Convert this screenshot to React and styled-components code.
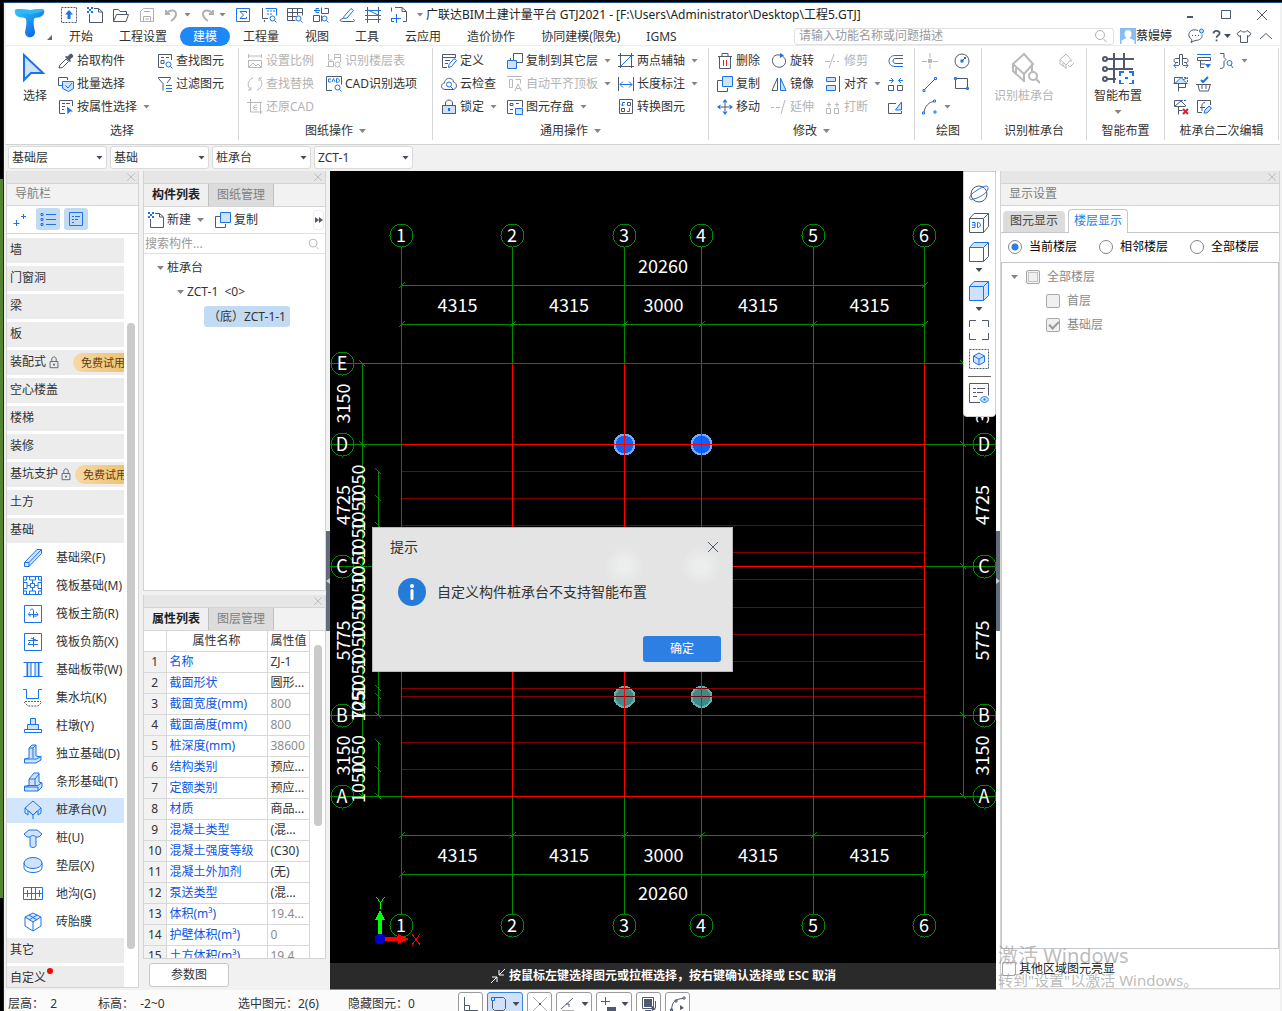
import React, { useState } from 'react';
import styled, { createGlobalStyle } from 'styled-components';

const GlobalStyle = createGlobalStyle`
* {
  box-sizing: border-box;
}
body {
  margin: 0;
  background: #000;
  overflow: hidden;
}
body, button, input, select {
  font-family: 'Noto Sans', 'Noto Sans CJK SC', sans-serif;
  font-size: 12px;
  line-height: 16px;
  color: #333;
}
button {
  border: 0;
  padding: 0;
  background: none;
  white-space: nowrap;
}
`;

/* ---------- icons ---------- */

const Svg = styled.svg`
flex: none;
display: block;
fill: none;
stroke-width: 1;
.d { stroke: ${({ $muted }) => ($muted ? '#b9b9b9' : '#4f5a6e')}; }
.b { stroke: ${({ $muted }) => ($muted ? '#b9b9b9' : '#1a73e8')}; }
.f { stroke: ${({ $muted }) => ($muted ? '#b9b9b9' : '#1a73e8')}; fill: ${({ $muted }) => ($muted ? '#eee' : '#cfe2fa')}; }
.D { fill: ${({ $muted }) => ($muted ? '#b9b9b9' : '#4f5a6e')}; }
.B { fill: ${({ $muted }) => ($muted ? '#b9b9b9' : '#1a73e8')}; }
.r { stroke: #e02020; }
.g { stroke: #b0b0b0; }
.w { stroke: #fff; }
.dd { stroke: #4f5a6e; stroke-dasharray: 2 1; }
.bb { stroke: #1a73e8; stroke-dasharray: 2 1; }
.k { stroke-width: 2; }
`;

const MAG = 'M9 11.5a2.5 2.5 0 1 0 5 0a2.5 2.5 0 1 0-5 0M13.5 13.5l2 2';

const glyphs = {
  upload: [['dd', 'M.5.5h15v15H.5z'], ['B', 'M8 3l4 4.5H9.5V12h-3V7.5H4z']],
  newDoc: [['d', 'M2.5 7v8.5h13V5L11.5 1.500H7M11.5 1.500V5h4'], ['B', 'M0 0h2v2H0zM4 0h2v2H4zM2 2h2v2H2zM0 4h2v2H0zM4 4h2v2H4z']],
  open: [['d', 'M.5 14.5v-12h5l1.5 2h6.5v3M.5 14.5l3-7h12l-2.5 7z']],
  save: [['g', 'M1.5 14.5v-10l3-3h10v13zM4.5 14V9.5h7V14M5 4.5h6M6 12h4']],
  undo: [['g k', 'M2 3v4h4M2.5 7C5 2.500 12 2 12 7c0 3-2 5-5 7']],
  redo: [['g k', 'M14 3v4h-4M13.5 7C11 2.500 4 2 4 7c0 3 2 5 5 7']],
  sigma: [['b', 'M1.5 1.5h13v13h-13z'], ['b', 'M11.5 6V4.5H5L8.500 8 5 11.5h6.5V10']],
  calSearch: [['d', 'M1.5 1v10.5H7M3.500 13v2'], ['b', 'M4.5 1.5h11v7M6 4h2M9 4h2M12 4h2M6 7h2M9 7h2'], ['b', MAG]],
  gridSearch: [['d', 'M.5 1.5h15v7M.5 1.5v12h8M.5 5.5h15M.5 9.5h9M5.5 1.5v12M10.5 1.5v7'], ['b', MAG]],
  planSearch: [['b', 'M6 1.5H3v4h3M1 3.5h6'], ['d', 'M8.500.5v6h7v-5h-4M.5 8.500h6v6h-6zM8.500 8.500v6'], ['b', MAG]],
  pen: [['b', 'M5 9.5l7-8 2.5 2L8 11l-3.5.5z'], ['d', 'M4 11.5C-1 13 1 14.500 5 14.500h9c2 0 2-2 0-2']],
  rail: [['d', 'M2.5 0v16M13.5 0v16'], ['b', 'M0 3.5h16M0 8.5h16M0 12.5h16M3 3l10 5']],
  docPlus: [['d', 'M4 .5h7l4.5 4v10H12M.5 4.5v-4M11 .5v4h4M3 14.5H.5V11'], ['b', 'M5.5 7v9M1 11.5h9']],
  pick: [['d', 'M1 15l1-3 6-6 2.5 2.5-6 6z'], ['D', 'M7 4l5 5 1-1-1-1.5L15 4c1-2-2-4-3-3L9.5 3.5 8 3z']],
  batch: [['d', 'M4 9.5H.5v-8h9V4'], ['f', 'M4.5 5.5h11v7l-5 3-6-3z'], ['b', 'M7.5 9.5l2.5 2.5 4-5']],
  byAttr: [['d', 'M7 14.5H1.5v-13h13V7M4 4.5h3M8 4.5h4M4 7.5h3M4 10.5h2'], ['B', 'M9 7.5l6 5h-3l-2.5 3z']],
  findEl: [['d', 'M7 14.5H1.5v-13h13V7M4 4.5h3M4 7.5h3v3H4zM9 4.5h3'], ['b', MAG]],
  filter: [['d', 'M6 14.5V7.5L1.5 2.5v-1h12v1L10 7'], ['b', 'M9 9.5h6M9 12.5h6M9 15.5h6']],
  ratio: [['d', 'M1.5 1v4M14.5 1v4M1.5 3h13M1.5 7.5h13v7h-13zM2 14l4-4 3 3 2-2 3 3']],
  swap: [['d', 'M6 2C0 4 0 11 4 14M4 14H1M4 14v-3M10 14c6-2 6-9 2-12M12 2h3M12 2v3']],
  restore: [['d', 'M3.5 0v13h12M0 3.5h15M13.5 3v12M10 6c-5 0-5 5 0 5M7 8.5h3']],
  floors: [['d', 'M2.5 1v6h4M.5 13.5h7v-5h-5v5M8.5 7V1.5h6V9M8.5 4.5h6'], ['b', MAG]],
  cad: [['d', 'M6 14.5H.5v-14h15v8'], ['b', 'M5 3H2.5v3H5M6 6l1.5-3.5L9 6M10.5 2.5v4c4 0 4-4 0-4'], ['b', MAG]],
  define: [['d', 'M6 14.5H1.5v-13h13V5M1.5 4.5h13M4 7.5h5M4 10.5h3'], ['b', 'M7.5 14.5l.5-3 5-6 2.5 2-5 6z']],
  cloud: [['d', 'M4 13.5C-1 13 0 7 3.500 7 4 1 12 1 12.500 6c4 1 4 7-.5 7.500z'], ['b', 'M5.5 8.5a2.5 2.5 0 1 0 5 0a2.5 2.5 0 1 0-5 0M9.5 10.5l3 3']],
  lock: [['f', 'M1.5 6.5h13v8h-13z'], ['d', 'M1.5 6.5h13v8h-13zM4.5 6V4c0-4 7-4 7 0v2'], ['b k', 'M8 9v3']],
  copyTo: [['f', 'M.5 7.5h9v8h-9z'], ['d', 'M6.5 7V.5h9v9H10M3.5 7V5']],
  autoTop: [['d', 'M0 .5h15M2.5 3.5h3v8h-3zM8.5 3.5h5v4M8 15l3-7 3.5 7M9.5 12.5h4']],
  saveEl: [['d', 'M6 14.5H.5v-13h15v7M3 4.5h3v2H3zM9 4.5h3M3 10.5h3'], ['f', 'M8.5 9.5h7v6h-7z']],
  twoPoint: [['d', 'M2.5 0v15M13.5 0v15M0 2.5h16M0 13.5h16'], ['b', 'M3 13L13 3']],
  length: [['d', 'M.5 1v14M15.5 1v14'], ['b', 'M2 8.5h12M5 5.5l-3 3 3 3M11 5.5l3 3-3 3']],
  convert: [['d', 'M1.5.5h13v14h-13zM9.5 3.5h3v3h-3zM3.5 9.5h3v3h-3z'], ['b', 'M7 3.5H4.5V7M3 5.5L4.5 7 6 5.5M9 12.5h2.5V9']],
  trash: [['d', 'M1 3.5h14M5 3V.5h6V3M2.5 4v11.5h11V4'], ['r', 'M6.5 7v6M9.5 7v6']],
  rotate: [['d', 'M9 2C3 1 1 5 1.500 8.500c1 7 11 8 13 1 .5-3-1-5-3-6.500'], ['B', 'M9 0l4 2.5L9 5z']],
  trim: [['d', 'M0 8.5h5M8 8.5h2M12 8.5h2M4 15L9 1']],
  copy: [['d', 'M5 4.5H.5v11h10V12'], ['f', 'M5.5.5h10v10h-10z']],
  mirror: [['d', 'M6.5 2v12.5H1z'], ['f', 'M9.5 2v12.5H15z']],
  align: [['f', 'M1.5 1.5h9v4h-9zM1.5 9.5h9v5h-9z'], ['d', 'M14.5 0v16']],
  move: [['d', 'M8 4v8M4 8h8'], ['B', 'M8 0l2.5 3.5h-5zM8 16l2.5-3.5h-5zM0 8l3.5-2.5v5zM16 8l-3.5-2.5v5z']],
  extend: [['d', 'M0 8.5h3M5 8.5h4M10 15l4-14']],
  breakIt: [['d', 'M1.5 9.5h4v5h-4zM9.5 9.5h4v5h-4zM2 5.5h4M4 3v5M10 5.5h4M12 3v5']],
  offset: [['b', 'M15 2.5H7c-8 0-8 11 0 11h8'], ['d', 'M15 5.5H8c-4 0-4 5 0 5h7']],
  merge: [['d', 'M.5 9.5h5v5h-5zM9.5 9.5h5v5h-5z'], ['b', 'M1 4.5h4M3 2l2.5 2.5L3 7M15 4.5h-4M13 2l-2.5 2.5L13 7']],
  stretch: [['d', 'M8 4.5H.5v10h13V12'], ['f', 'M7.5 11l6-8v8z']],
  point: [['d', 'M8 0v5M8 11v5M0 8.5h5M11 8.5h5'], ['D', 'M6 6h4v4H6z']],
  circle: [['d', 'M1 8a7 7 0 1 0 14 0a7 7 0 1 0-14 0M8 8l3-3'], ['B', 'M6.5 6.5h3v3h-3zM10 4h2v2h-2z']],
  line: [['d', 'M3 13L13 3'], ['b', 'M1 13.5h2v2H1zM12.5 1.5h2v2h-2z']],
  rect: [['d', 'M1.5 2.5h12v10h-12z'], ['b', 'M.5 1.5h2v2h-2zM12.5 11.5h2v2h-2z']],
  arc: [['d', 'M2 13C3 7 7 3 12 2.500'], ['b', 'M.5 13h2v2h-2zM11.5 1h2v2h-2zM12 12h2v2h-2z']],
  tap: [['d', 'M6.5 12V1.5h3V12M6 5.5H2.500c-2 0-2 4 0 4H5M10 5.500h3.500c2 0 2 4 0 4H11'], ['b', 'M1 12.5h5M3 10l-2 2.5L3 15M15 12.5h-5M13 10l2 2.5-2 2.5']],
  layers: [['b', 'M1 1.5h14'], ['d', 'M1.5 4.5h13v3h-13zM4.5 8v6.5H8M4 11h5'], ['B', 'M9 11h6l-3 4z']],
  zigFind: [['d', 'M1 .5h4v4l2 2-2 2v4c0 2-1 3-4 3'], ['b', 'M8 10a2.5 2.5 0 1 0 5 0a2.5 2.5 0 1 0-5 0M12 12l2 3']],
  slope: [['d', 'M14 2L1.5 7.5v-6H8'], ['bb', 'M8 1.5h6.5v5'], ['f', 'M2 7.5l6-6 6 6z'], ['d', 'M.5 7.5h14M5.5 15.5V8M5.5 11.5h7V8']],
  basket: [['d', 'M0 8.5h15M2 9l1.5 6h9L14 9M6 9v4M10 9v4'], ['b k', 'M5 4l2 2 5-5']],
  slopeDel: [['bb', 'M8 1.5h6'], ['d', 'M8 1.5H1.5v6h11M2 7l6-5 5 5M5.5 15.5V8M5.5 11.5h4'], ['r k', 'M10 10l5 5M15 10l-5 5']],
  editMark: [['d', 'M14.5 6V1.5h-13v12H6M9 3.5C5 4 6 7 6 12M4 8.500h5'], ['f', 'M8 14l1-3 4-4 2.5 2-4.5 5z']],
  arrowBig: [['f k', 'M5 3v25l7-7h12z']],
  capBig: [['d k', 'M16 2L5 12l11 10 9-10zM5 12v7l11 10M16 22v8M8 16v6M24 20v-8'], ['d k', 'M21 24a4 4 0 1 0 8 0a4 4 0 1 0-8 0M28 27l4 4']],
  capSmall: [['d', 'M8 1L2 6.5 8 12l5-5.500zM2 7v4l6 4M5 10v3M8 12v4M13 7v2M10 12l2 2 4-4']],
  gridBig: [['d k', 'M5 7h27M5 17h26M5 27h9M12 1v30M22 1v15'], ['d k', 'M1 7a2 2 0 1 0 4 0a2 2 0 1 0-4 0M1 17a2 2 0 1 0 4 0a2 2 0 1 0-4 0M1 27a2 2 0 1 0 4 0a2 2 0 1 0-4 0'], ['b k', 'M22 20h-4v4M27 20h4v4M22 32h-4v-4M27 32h4v-4M23 26h3']],
  plus2: [['b', 'M4.5 9v6M1.5 12.5h6M11.5 3v5M9 5.5h5']],
  listView: [['b', 'M1 2.5h2v2H1zM1 7.5h2v2H1zM1 12.5h2v2H1zM6 3.5h10M6 8.5h10M6 13.5h10']],
  cardView: [['b', 'M1.5 1.5h13v13h-13zM4 5.5h2M7 5.5h5M4 8.5h2M7 8.5h3M4 11.5h2']],
  search: [['g', 'M2.5 7a4.5 4.5 0 1 0 9 0a4.5 4.5 0 1 0-9 0M10.5 11l3 3']],
  miniLock: [['d', 'M3.5 7.5h9v7h-9zM5.5 7V4.5c0-3 5-3 5 0V7'], ['d k', 'M8 10v2']],
  cross: [['g', 'M3 3l10 10M13 3L3 13']],
  crossDark: [['d', 'M3 3l10 10M13 3L3 13']],
  minimize: [['d k', 'M5 10h6']],
  maximize: [['d', 'M3.5 3.5h9v8h-9z']],
  chat: [['d', 'M10 2.5C3 0 0 5 1 8c1 3 3 3 3 4l-1 2.500 4-2c5 0 8-3 7-6'], ['D', 'M4 7h1v1H4zM7 7h1v1H7zM10 7h1v1h-1z'], ['f', 'M11.5 3a2 2 0 1 0 4 0a2 2 0 1 0-4 0']],
  help: [['d k', 'M4 5c0-4 7-4 7 0 0 2-3.500 2.500-3.500 5M7.500 12v2']],
  shirt: [['d', 'M5 2.5c1 2 5 2 6 0l4 3-2 3-1.500-1v7h-7v-7L3 8.500l-2-3z']],
  up: [['d', 'M2 11l6-5.5 6 5.5']],
  hint: [['w', 'M15 1l-6 6M9 2v5h5M1 15l6-6M2 9h5v5']],
  ortho: [['d', 'M1.5 1v13.5H15M2 9.5h4.5v5']],
  region: [['d', 'M3.5 1.5h9l2 2v9l-2 2h-9l-2-2v-9z'], ['f', 'M.5 1.5h3v3h-3z']],
  crossOff: [['g', 'M1 1l14 14M15 1L1 15'], ['D', 'M7 7h2v2H7z']],
  angle: [['d', 'M1 13L13 2M6 8h3v3'], ['g k', 'M2 15h12']],
  plusBar: [['d', 'M5.5 1v8M1 5.5h9'], ['D', 'M7 11h9v4H7z']],
  shade: [['D', 'M3 3h8v8H3z'], ['d', 'M1.5 1.5h11v11h-11zM14.5 5v7M4 14.5h6'], ['D', 'M10 9l5 4-4 2z']],
  curve: [['d', 'M1.5 14C2 6 5 3 13 2.500M.5 13h2v2h-2zM5 4h2v2H5zM13 1h2v2h-2z'], ['D', 'M10 9l4 3-4 2z']],
};

// bigger glyphs drawn on a 20 unit grid
const partGlyphs = {
  beam: [['f', 'M1.5 14.5L14 1.5h4.5v4L6 18.5H1.5z'], ['b', 'M1.5 14.5H6v4M6 14.5L18.5 1.5']],
  raft: [['b', 'M.5.5h18v18H.5zM3.500 1v3H1M3.500 18v-3H1M15.500 1v3H18M15.500 18v-3H18M7.500 7.500h4v4h-4zM6.500 1v3h6V1M6.500 18v-3h6v3M1 6.500h3v6H1M18 6.500h-3v6h3M9.500 4v3M9.500 12v3M4 9.500h3M12 9.500h3']],
  mainBar: [['b', 'M1.5 1.5h17v17h-17zM10.5 14V6.5c0-2-3-2-3 0M6 10.5h9M7 8c-2 2-2 4 1 4M13 8c3 2 2 5-2 4']],
  negBar: [['b', 'M1.5 1.5h17v17h-17zM10.5 5v10M5 8.5h10M5 12.5h10M8 6l5 2M7 10l-2 2.5']],
  strip: [['f', 'M4 2.5h4v14H4zM12 2.5h4v14h-4z'], ['b', 'M.5 2.5h19M.5 16.5h19M4.5 3v13M15.5 3v13']],
  pit: [['b', 'M0 1.5h3.5v9h12v-9H19'], ['bb', 'M2 13.5h16'], ['dd', 'M1 14l4 4h10l4-4']],
  pier: [['f', 'M7.5 2.5h5v6h-5zM4.5 8.5h11v5h-11z'], ['b', 'M1.5 13.5h17v3h-17z']],
  single: [['f', 'M6 14V4l3-3h4v11l5 1v3l-5 3H1.5v-4z'], ['b', 'M6 4h4v10M10 4l3-3M1.5 15h12l5-3']],
  stripBase: [['f', 'M6 13V7l5-6h5v9l3 1v4l-4 4H1.5v-5H6z'], ['b', 'M6 7h6v6M12 7l4-5M4 13.5h11l4-3M1.5 15h13.5v4']],
  cap: [['f', 'M10 1L2 8l8 7 8-7z'], ['b', 'M2 8v5l3 2v-4M18 8v5l-3 2v-4M10 15v4M6 11l4 4 4-4']],
  pile: [['f', 'M1 6l5-4h8l5 4-3 3h-3v9c-1 2-5 2-6 0V9H4z'], ['b', 'M7 9c2-2 4-2 6 0']],
  cushion: [['b', 'M1 7v5c1 6 17 6 18 0V7'], ['f', 'M1 7a9 5.5 0 1 0 18 0a9 5.5 0 1 0-18 0']],
  trench: [['b', 'M.5 3.5h19v12H.5zM.5 9.5h19M4.5 6v7M8.5 4v11M12.5 4v11M16.5 6v7']],
  brick: [['f', 'M10 1l8 4-8 5-8-5z'], ['b', 'M2 5v9l8 5 8-5V5M10 10v9M6 8l8-5M6 3l8 5']],
  orbit: [['d', 'M2 10a8 8 0 1 0 16 0a8 8 0 1 0-16 0'], ['b', 'M5 15C-2 17 0 11 7 7c7-5 13-7 12-2-1 4-9 9-14 10']],
  cube3d: [['d', 'M.5 5.5h14v14H.5zM.5 5.5L5 .5h14.5v13l-5 6M14.5 5.5l5-5'], ['b', 'M3 9.5h3v5H3M3 12h3M8.5 9.5v5c4 0 4-5 0-5']],
  cubeTop: [['d', 'M.5 5.5h14v14H.5zM14.5 19.5l5-5V.5'], ['f', 'M.5 5.5L5 .5h14.5l-5 5z']],
  cubeFull: [['f', 'M.5 5.5L5 .5h14.5v14l-5 5H.5z'], ['b', 'M.5 5.5h14v14M14.5 5.5l5-5']],
  frame: [['d', 'M.5 7V.5H7M13 .5h6.5V7M.5 13v6.5H7M13 19.5h6.5V13']],
  hexBox: [['dd', 'M.5.5h19v19H.5z'], ['f', 'M10 4l5.5 3v6L10 16l-5.5-3V7z'], ['b', 'M4.5 7l5.5 3 5.5-3M10 10v6']],
  listEye: [['d', 'M11 19.5H.5V.5h19v12M4 5.5h3M8 5.5h8M4 9.5h3M8 9.5h6M4 13.5h4'], ['f', 'M11 16.5c3-4 6-4 9 0-3 4-6 4-9 0'], ['B', 'M14.5 15.5h2v2h-2z']],
};

const Icon = ({ name, size = 16, muted }) => {
  const big = partGlyphs[name];
  const box = big ? 20 : name.endsWith('Big') ? 32 : 16;
  return (
    <Svg width={size} height={size} viewBox={`0 0 ${box} ${box}`} $muted={muted} aria-hidden="true">
      {(big || glyphs[name]).map(([cls, d], i) => <path key={i} className={cls} d={d} />)}
    </Svg>
  );
};

const Caret = styled.span`
flex: none;
width: 7px;
height: 4px;
background: ${({ $dark }) => ($dark ? '#444c5c' : '#858585')};
clip-path: polygon(0 0, 100% 0, 50% 100%);
`;

/* ---------- window frame and header ---------- */

const Screen = styled.div`
display: flex;
height: 100vh;
padding-top: 2px;
background: #000;
`;

const Edge = styled.div`
flex: 0 0 3px;
background: linear-gradient(#000 177px, #568432 177px, #568432 896px, #000 896px);
`;

const Window = styled.div`
flex: 1;
min-width: 0;
display: flex;
flex-direction: column;
padding: 0 2px;
background: #f1f1f1;
border-top: 1px solid #24508c;
border-left: 1px solid #16263c;
`;

const Header = styled.header`
display: flex;
height: 43px;
background: #fff;
border-bottom: 1px solid #ececec;
`;

const LogoBox = styled.div`
flex: 0 0 50px;
display: flex;
align-items: center;
padding: 0 2px 0 7px;
`;

const Corner = styled.span`
align-self: flex-end;
flex: none;
width: 5px;
height: 5px;
margin-bottom: 5px;
background: #666;
clip-path: polygon(100% 0, 100% 100%, 0 100%);
`;

const HeaderRows = styled.div`
flex: 1;
min-width: 0;
`;

const TitleRow = styled.div`
display: flex;
align-items: center;
height: 23px;
`;

const QuickButton = styled.button`
display: flex;
align-items: center;
justify-content: center;
flex: 0 0 ${({ $wide }) => ($wide ? 35 : 26)}px;
gap: 4px;
height: 22px;
`;

const Overflow = styled.button`
display: flex;
align-items: center;
justify-content: center;
flex: 0 0 14px;
height: 22px;
padding-left: 2px;
`;

const AppTitle = styled.h1`
flex: 1;
margin: 0;
font-size: 12px;
font-weight: 400;
line-height: 22px;
white-space: nowrap;
color: #222;
`;

const WinButton = styled.button`
display: flex;
align-items: center;
justify-content: center;
width: 36px;
height: 22px;
`;

const MenuRow = styled.nav`
display: flex;
align-items: center;
height: 20px;
`;

const MenuItem = styled.button`
height: 19px;
padding: 0 13px;
border-radius: 10px;
line-height: 19px;
background: ${({ $active }) => ($active ? '#1e88f8' : 'none')};
color: ${({ $active }) => ($active ? '#fff' : '#333')};
`;

const SearchBox = styled.label`
display: flex;
align-items: center;
flex: 0 0 320px;
height: 17px;
margin-left: auto;
padding: 0 4px;
border: 1px solid #e0e0e0;
border-radius: 3px;
`;

const PlainInput = styled.input`
flex: 1;
min-width: 0;
height: 15px;
padding: 0;
border: 0;
outline: 0;
background: none;
&::placeholder {
  color: #9a9a9a;
}
`;

const User = styled.button`
display: flex;
align-items: center;
margin: 0 16px 0 6px;
color: #222;
`;

const HeadTool = styled.button`
display: flex;
align-items: center;
flex: 0 0 ${({ $w }) => $w || 22}px;
height: 18px;
`;

/* ---------- ribbon ---------- */

const Ribbon = styled.div`
display: flex;
height: 99px;
padding-top: 2px;
background: #fff;
border-bottom: 1px solid #d2d2d2;
`;

const Group = styled.section`
flex: 0 0 ${({ $w }) => $w}px;
height: 92px;
border-right: 1px solid #d8d8d8;
`;

const GroupBody = styled.div`
display: flex;
height: 71px;
padding: 1px 0 0 ${({ $pad }) => $pad || 8}px;
`;

const ToolGrid = styled.div`
display: grid;
grid-auto-flow: column;
grid-template-rows: repeat(3, 23px);
grid-template-columns: ${({ $cols }) => $cols};
align-items: center;
`;

const Tool = styled.button`
display: flex;
align-items: center;
height: 22px;
gap: 3px;
color: ${({ disabled }) => (disabled ? '#b3b3b3' : '#333')};
${Caret} {
  margin-left: 3px;
}
`;

const BigTool = styled.button`
display: flex;
flex-direction: column;
align-items: center;
width: ${({ $w }) => $w}px;
height: 70px;
padding-top: 3px;
line-height: 24px;
color: ${({ disabled }) => (disabled ? '#b3b3b3' : '#333')};
${Caret} {
  margin-top: 2px;
}
`;

const Caption = styled.div`
display: flex;
align-items: center;
justify-content: center;
gap: 6px;
height: 24px;
color: #333;
`;

const toolItem = (item) => {
  const [icon, text, opts = ''] = item;
  const off = opts.includes('off');
  return (
    <Tool key={icon} disabled={off} aria-label={text || icon}>
      <Icon name={icon} muted={off} />
      {text}
      {opts.includes('menu') && <Caret />}
    </Tool>
  );
};

const selectTools = [
  ['pick', '拾取构件'], ['batch', '批量选择'], ['byAttr', '按属性选择', 'menu'],
  ['findEl', '查找图元'], ['filter', '过滤图元'],
];
const sheetTools = [
  ['ratio', '设置比例', 'off'], ['swap', '查找替换', 'off'], ['restore', '还原CAD', 'off'],
  ['floors', '识别楼层表', 'off'], ['cad', 'CAD识别选项'],
];
const commonTools = [
  ['define', '定义'], ['cloud', '云检查'], ['lock', '锁定', 'menu'],
  ['copyTo', '复制到其它层', 'menu'], ['autoTop', '自动平齐顶板', 'off menu'], ['saveEl', '图元存盘', 'menu'],
  ['twoPoint', '两点辅轴', 'menu'], ['length', '长度标注', 'menu'], ['convert', '转换图元'],
];
const editTools = [
  ['trash', '删除'], ['copy', '复制'], ['move', '移动'],
  ['rotate', '旋转'], ['mirror', '镜像'], ['extend', '延伸', 'off'],
  ['trim', '修剪', 'off'], ['align', '对齐', 'menu'], ['breakIt', '打断', 'off'],
  ['offset', ''], ['merge', ''], ['stretch', ''],
];
const drawTools = [['point', '', 'off'], ['line', ''], ['arc', '', 'menu'], ['circle', ''], ['rect', '']];
const capTools = [['tap', ''], ['slope', ''], ['slopeDel', ''], ['layers', ''], ['basket', ''], ['editMark', ''], ['zigFind', '', 'menu']];

/* ---------- combo bar ---------- */

const ComboBar = styled.div`
display: flex;
align-items: center;
gap: 3px;
height: 25px;
padding-left: 2px;
`;

const ComboBox = styled.div`
display: flex;
align-items: center;
width: 99px;
height: 23px;
padding-right: 3px;
background: #fff;
border: 1px solid #dadada;
border-radius: 3px;
`;

const ComboSelect = styled.select`
flex: 1;
min-width: 0;
height: 21px;
padding: 0 0 0 3px;
border: 0;
outline: 0;
background: none;
appearance: none;
`;

/* ---------- panels ---------- */

const Main = styled.main`
flex: 1;
min-height: 0;
display: flex;
padding-top: 1px;
`;

const Panel = styled.section`
display: flex;
flex-direction: column;
flex: ${({ $flex }) => $flex || '1'};
min-width: 0;
min-height: 0;
overflow: hidden;
background: #fff;
border: 1px solid #d4d4d4;
border-top: 0;
`;

const Strip = styled.div`
display: flex;
justify-content: flex-end;
align-items: center;
flex: 0 0 12px;
padding-right: 1px;
background: #e6e6e6;
border-bottom: 1px solid #d4d4d4;
`;

const CloseButton = styled.button`
display: flex;
height: ${({ $tall }) => ($tall ? 16 : 12)}px;
`;

const PanelTitle = styled.h2`
flex: 0 0 22px;
margin: 0;
padding-left: 8px;
font-size: 12px;
font-weight: 400;
line-height: 20px;
color: #808080;
background: #f2f2f2;
border-bottom: 1px solid #d4d4d4;
`;

const PanelClose = () => (
  <Strip><CloseButton aria-label="关闭"><Icon name="cross" size={12} /></CloseButton></Strip>
);

/* navigation */

const NavColumn = styled.div`
flex: 0 0 133px;
min-width: 0;
display: flex;
margin: 0 4px 2px 0;
`;

const NavTools = styled.div`
display: flex;
align-items: center;
gap: 4px;
flex: 0 0 28px;
padding: 0 0 1px 1px;
border-bottom: 1px solid #d4d4d4;
`;

const NavToggle = styled.button`
display: flex;
align-items: center;
justify-content: center;
width: 24px;
height: 22px;
border-radius: 3px;
background: ${({ $on }) => ($on ? '#c2daf2' : 'none')};
`;

const NavBody = styled.div`
flex: 1;
min-height: 0;
display: flex;
`;

const NavList = styled.div`
flex: 1;
min-width: 0;
display: flex;
flex-direction: column;
gap: 3px;
padding-top: 4px;
overflow: hidden;
`;

const Category = styled.button`
display: flex;
align-items: center;
flex: 0 0 25px;
gap: 1px;
padding: 0 0 1px 3px;
overflow: hidden;
background: #ececec;
`;

const Trial = styled.span`
flex: none;
width: 60px;
height: 19px;
margin-left: ${({ $gap }) => $gap}px;
padding-left: 8px;
border-radius: 10px 0 0 10px;
background: linear-gradient(90deg, #f5d9a6, #ebbf64);
color: #6b3a0c;
font-size: 11px;
line-height: 19px;
text-align: left;
white-space: nowrap;
`;

const RedDot = styled.span`
align-self: flex-start;
width: 6px;
height: 6px;
margin-top: 2px;
border-radius: 50%;
background: #f00;
`;

const Part = styled.button`
display: flex;
align-items: center;
flex: 0 0 25px;
gap: 13px;
padding: 0 0 1px 16px;
background: ${({ $active }) => ($active ? '#d1e6fc' : 'none')};
`;

const Track = styled.div`
display: flex;
flex-direction: column;
flex: 0 0 ${({ $w }) => $w}px;
align-items: center;
`;

const Thumb = styled.div`
flex: ${({ $size }) => $size} 0 0;
width: 8px;
border-radius: 4px;
background: #cacaca;
`;

const Space = styled.div`
flex: ${({ $size }) => $size} 0 0;
`;

const categories = [
  { name: '墙' }, { name: '门窗洞' }, { name: '梁' }, { name: '板' },
  { name: '装配式', trial: 11 }, { name: '空心楼盖' }, { name: '楼梯' }, { name: '装修' },
  { name: '基坑支护', trial: 1 }, { name: '土方' }, { name: '基础' },
];

const parts = [
  ['beam', '基础梁(F)'], ['raft', '筏板基础(M)'], ['mainBar', '筏板主筋(R)'], ['negBar', '筏板负筋(X)'],
  ['strip', '基础板带(W)'], ['pit', '集水坑(K)'], ['pier', '柱墩(Y)'], ['single', '独立基础(D)'],
  ['stripBase', '条形基础(T)'], ['cap', '桩承台(V)'], ['pile', '桩(U)'], ['cushion', '垫层(X)'],
  ['trench', '地沟(G)'], ['brick', '砖胎膜'],
];

const Navigation = () => {
  const [active, setActive] = useState('cap');
  return (
    <NavColumn>
      <Panel>
        <PanelClose />
        <PanelTitle>导航栏</PanelTitle>
        <NavTools>
          <NavToggle aria-label="展开"><Icon name="plus2" /></NavToggle>
          <NavToggle $on aria-label="列表"><Icon name="listView" /></NavToggle>
          <NavToggle $on aria-label="卡片"><Icon name="cardView" /></NavToggle>
        </NavTools>
        <NavBody>
          <NavList>
            {categories.map(({ name, trial }) => (
              <Category key={name}>
                {name}
                {trial && <Icon name="miniLock" size={14} />}
                {trial && <Trial $gap={trial}>免费试用</Trial>}
              </Category>
            ))}
            {parts.map(([icon, text]) => (
              <Part key={icon} $active={icon === active} onClick={() => setActive(icon)}>
                <Icon name={icon} size={20} />{text}
              </Part>
            ))}
            <Category>其它</Category>
            <Category>自定义<RedDot /></Category>
          </NavList>
          <Track $w={14}><Space $size={89} /><Thumb $size={628} /><Space $size={38} /></Track>
        </NavBody>
      </Panel>
    </NavColumn>
  );
};

/* component list and properties */

const MidColumn = styled.div`
flex: 0 0 183px;
min-width: 0;
display: flex;
flex-direction: column;
gap: 4px;
`;

const Tabs = styled.div`
display: flex;
flex: 0 0 23px;
background: #f2f2f2;
border-bottom: 1px solid #d4d4d4;
`;

const Tab = styled.button`
padding: 0 8px;
font-weight: ${({ $active }) => ($active ? 600 : 400)};
color: ${({ $active }) => ($active ? '#222' : '#808080')};
background: ${({ $active }) => ($active ? '#f0f0f0' : '#dcdcdc')};
border-right: 1px solid #c0c0c0;
`;

const ListTools = styled.div`
display: flex;
align-items: center;
flex: 0 0 27px;
gap: 11px;
padding: 0 1px 0 4px;
border-bottom: 1px solid #e2e2e2;
`;

const MoreButton = styled.button`
display: flex;
align-items: center;
justify-content: center;
width: 11px;
height: 20px;
margin-left: auto;
border: 1px solid #ececec;
border-radius: 3px;
`;

const ListSearch = styled.label`
display: flex;
align-items: center;
flex: 0 0 20px;
padding: 0 4px 0 1px;
border-bottom: 1px solid #e2e2e2;
`;

const Tree = styled.div`
padding-top: 2px;
`;

const TreeRow = styled.div`
display: flex;
align-items: center;
gap: ${({ $gap }) => $gap || 3}px;
height: 24px;
padding-left: ${({ $indent }) => $indent}px;
`;

const Selected = styled.span`
height: 21px;
padding: 0 4px;
border-radius: 3px;
line-height: 21px;
background: #c2daf2;
`;

const PropBody = styled.div`
flex: 1;
min-height: 0;
display: flex;
overflow: hidden;
`;

const PropTable = styled.table`
flex: 0 0 165px;
width: 165px;
align-self: flex-start;
table-layout: fixed;
border-collapse: collapse;
td, th {
  height: 21px;
  padding: 0 3px;
  border-right: 1px solid #d8d8d8;
  border-bottom: 1px solid #d8d8d8;
  font-weight: 400;
  line-height: 20px;
  white-space: nowrap;
  overflow: hidden;
}
tbody th {
  padding: 0;
  background: #f2f2f2;
  text-align: center;
}
`;

const NameCell = styled.td`
color: #0b55e6;
`;

const ValueCell = styled.td`
color: ${({ $grey }) => ($grey ? '#8c8c8c' : '#333')};
`;

const ParamRow = styled.div`
flex: 0 0 27px;
padding: 0 6px;
`;

const ParamButton = styled.button`
width: 80px;
height: 24px;
background: #fff;
border: 1px solid #c8c8c8;
border-radius: 3px;
`;

const props = [
  ['名称', 'ZJ-1'], ['截面形状', '圆形...'], ['截面宽度(mm)', '800', 1], ['截面高度(mm)', '800', 1],
  ['桩深度(mm)', '38600', 1], ['结构类别', '预应...'], ['定额类别', '预应...'], ['材质', '商品...'],
  ['混凝土类型', '(混...'], ['混凝土强度等级', '(C30)'], ['混凝土外加剂', '(无)'], ['泵送类型', '(混...'],
  ['体积(m³)', '19.4...', 1], ['护壁体积(m³)', '0', 1], ['土方体积(m³)', '19.4', 1],
];

const ComponentColumn = () => (
  <MidColumn>
    <Panel $flex="420 0 0">
      <PanelClose />
      <Tabs><Tab $active>构件列表</Tab><Tab>图纸管理</Tab></Tabs>
      <ListTools>
        <Tool><Icon name="newDoc" />新建<Caret /></Tool>
        <Tool><Icon name="copy" />复制</Tool>
        <MoreButton aria-label="更多">
          <Svg width="8" height="6" viewBox="0 0 8 6"><path className="D" d="M0 0l4 3-4 3zM4 0l4 3-4 3z" /></Svg>
        </MoreButton>
      </ListTools>
      <ListSearch>
        <PlainInput placeholder="搜索构件..." aria-label="搜索构件" />
        <Icon name="search" size={14} />
      </ListSearch>
      <Tree>
        <TreeRow $indent={13}><Caret />桩承台</TreeRow>
        <TreeRow $indent={33}><Caret />ZCT-1&nbsp; &lt;0&gt;</TreeRow>
        <TreeRow $indent={60}><Selected>（底）ZCT-1-1</Selected></TreeRow>
      </Tree>
    </Panel>
    <Panel $flex="364 0 0">
      <PanelClose />
      <Tabs><Tab $active>属性列表</Tab><Tab>图层管理</Tab></Tabs>
      <PropBody>
        <PropTable>
          <colgroup><col width="22" /><col width="101" /><col width="42" /></colgroup>
          <thead><tr><th aria-label="序号" /><th>属性名称</th><th>属性值</th></tr></thead>
          <tbody>
            {props.map(([name, value, grey], i) => (
              <tr key={name}>
                <th scope="row">{i + 1}</th>
                <NameCell>{name}</NameCell>
                <ValueCell $grey={grey}>{value}</ValueCell>
              </tr>
            ))}
          </tbody>
        </PropTable>
        <Track $w={17}><Space $size={14} /><Thumb $size={182} /><Space $size={132} /></Track>
      </PropBody>
    </Panel>
    <ParamRow><ParamButton>参数图</ParamButton></ParamRow>
  </MidColumn>
);

/* ---------- drawing area ---------- */

const Splitter = styled.div`
flex: 0 0 4px;
display: flex;
align-items: flex-start;
background: ${({ $white }) => ($white ? '#fff' : '#f1f1f1')};
`;

const Grip = styled.button`
width: 4px;
height: 100px;
margin-top: 360px;
background: #626c7a;
&::before {
  content: '';
  display: block;
  height: 6px;
  background: #c8ccd2;
  clip-path: ${({ $right }) => ($right ? 'polygon(0 0, 100% 50%, 0 100%)' : 'polygon(100% 0, 0 50%, 100% 100%)')};
}
`;

const CanvasColumn = styled.div`
flex: 1;
min-width: 0;
display: flex;
flex-direction: column;
`;

const Canvas = styled.div`
position: relative;
flex: 1;
min-height: 0;
overflow: hidden;
background: #000;
`;

const Plan = styled.svg`
display: block;
width: 100%;
height: 100%;
fill: none;
shape-rendering: crispEdges;
text {
  fill: #fff;
  font-family: 'Noto Sans CJK SC', sans-serif;
  font-size: 18px;
  text-anchor: middle;
}
`;

const xs = [401, 512, 624, 701, 813, 924];
const ys = [363, 444, 566, 715, 796];
const letters = ['E', 'D', 'C', 'B', 'A'];
const minor = [471, 498, 525, 552, 579, 607, 634, 661, 688, 696, 742, 769];
const spansX = ['4315', '4315', '3000', '4315', '4315'];
const spansY = ['3150', '4725', '5775', '3150'];
const chain = [471, 498, 525, 552, 579, 607, 634, 661, 688, 715];
const GREEN = '#008a00';

const Line = ({ x1, y1, x2, y2, c = GREEN }) => (
  <line x1={x1 + 0.5} y1={y1 + 0.5} x2={x2 + 0.5} y2={y2 + 0.5} stroke={c} />
);

const Tick = ({ x, y, back }) => (
  <Line x1={x - 3} y1={back ? y - 3 : y + 3} x2={x + 3} y2={back ? y + 3 : y - 3} />
);

const Bubble = ({ x, y, children }) => (
  <>
    <circle cx={x + 0.5} cy={y + 0.5} r="11.5" stroke={GREEN} />
    <text x={x} y={y + 7}>{children}</text>
  </>
);

const Turned = ({ x, y, children }) => (
  <text transform={`translate(${x + 7} ${y}) rotate(-90)`}>{children}</text>
);

const FloorPlan = () => (
  <Plan viewBox="330 171 666 792" role="img" aria-label="轴网">
    {xs.map((x, i) => (
      <g key={x}>
        <Line x1={x} y1={247} x2={x} y2={363} />
        <Line x1={x} y1={796} x2={x} y2={913} />
        <Bubble x={x} y={235}>{i + 1}</Bubble>
        <Bubble x={x} y={925}>{i + 1}</Bubble>
        <Tick x={x} y={324} />
        <Tick x={x} y={835} />
      </g>
    ))}
    {[285, 324, 835, 874].map((y) => <Line key={y} x1={401} y1={y} x2={924} y2={y} />)}
    {[401, 924].map((x) => <g key={x}><Tick x={x} y={285} /><Tick x={x} y={874} /></g>)}
    {spansX.map((t, i) => (
      <g key={i}>
        <text x={(xs[i] + xs[i + 1]) / 2 + 1} y="312">{t}</text>
        <text x={(xs[i] + xs[i + 1]) / 2 + 1} y="862">{t}</text>
      </g>
    ))}
    <text x="663" y="273">20260</text>
    <text x="663" y="900">20260</text>

    {ys.map((y, i) => (
      <g key={y}>
        <Line x1={330} y1={y} x2={401} y2={y} />
        <Line x1={924} y1={y} x2={996} y2={y} />
        <Bubble x={342} y={y}>{letters[i]}</Bubble>
        <Bubble x={984} y={y}>{letters[i]}</Bubble>
        <Tick x={362} y={y} back />
        <Tick x={963} y={y} back />
      </g>
    ))}
    <Line x1={362} y1={363} x2={362} y2={796} />
    <Line x1={963} y1={363} x2={963} y2={796} />
    <Line x1={378} y1={471} x2={378} y2={715} />
    <Line x1={378} y1={742} x2={378} y2={796} />
    {[...chain, 696, 742, 769, 796].map((y) => <Tick key={y} x={378} y={y} back />)}
    {spansY.map((t, i) => (
      <g key={i}>
        <Turned x={343} y={(ys[i] + ys[i + 1]) / 2}>{t}</Turned>
        <Turned x={982} y={(ys[i] + ys[i + 1]) / 2}>{t}</Turned>
      </g>
    ))}
    {chain.slice(1).map((y, i) => <Turned key={y} x={358} y={(chain[i] + y) / 2}>1050</Turned>)}
    <Turned x={358} y={705}>725</Turned>
    <Turned x={358} y={755}>1050</Turned>
    <Turned x={358} y={783}>1050</Turned>

    {[624, 701].map((x) => (
      <g key={x} strokeWidth="2">
        <circle cx={x + 0.5} cy="444.5" r="10" fill="#0d62fb" stroke="#74abff" />
        <circle cx={x + 0.5} cy="697" r="10" fill="#428888" stroke="#5fb3b0" />
      </g>
    ))}
    {minor.map((y) => <Line key={y} x1={401} y1={y} x2={924} y2={y} c="#820000" />)}
    {ys.map((y) => <Line key={y} x1={401} y1={y} x2={924} y2={y} c="#f00" />)}
    {xs.map((x) => <Line key={x} x1={x} y1={363} x2={x} y2={796} c="#f00" />)}

    <path d="M378 937v-17h-3l5-10 5 10h-3v17z" fill="#0f0" />
    <path d="M384 937h14v-3l11 5-11 5v-3h-14z" fill="#f00" />
    <circle cx="380" cy="939" r="5.5" fill="#0000c8" />
    <path d="M376.500 897l4 6 4-6M380.500 903v6" stroke="#0f0" />
    <path d="M412 934l8 11M420 934l-8 11" stroke="#f00" />
  </Plan>
);

const ViewBar = styled.div`
position: absolute;
top: 0;
right: 0;
display: flex;
flex-direction: column;
align-items: center;
width: 33px;
height: 246px;
padding: 8px 1px 0 0;
background: #fff;
border: 1px solid #d0d0d0;
border-radius: 0 0 4px 4px;
`;

const ViewButton = styled.button`
display: flex;
flex-direction: column;
align-items: center;
gap: 6px;
padding-bottom: 5px;
margin-top: 4px;
`;

const ViewRule = styled.div`
width: 23px;
height: 1px;
margin: 2px 0 2px;
background: #666;
`;

const Dialog = styled.div`
position: absolute;
left: 42px;
top: 356px;
width: 361px;
padding: 10px 11px 9px 17px;
display: flex;
flex-direction: column;
font-size: 14px;
border: 1px solid #b9b9b9;
background:
  radial-gradient(circle at 251px 38px, #ebeeec 6px, transparent 20px),
  radial-gradient(circle at 328px 38px, #ebeeec 6px, transparent 20px),
  #e4e4e4;
`;

const DialogHead = styled.div`
display: flex;
justify-content: space-between;
align-items: center;
height: 18px;
`;

const DialogText = styled.div`
display: flex;
align-items: center;
gap: 11px;
margin: 22px 0 30px;
padding-left: 8px;
color: #333;
`;

const OkButton = styled.button`
align-self: flex-end;
width: 78px;
height: 26px;
border-radius: 3px;
background: #2d7fe3;
color: #fff;
`;

const HintBar = styled.div`
display: flex;
align-items: center;
justify-content: center;
gap: 3px;
flex: 0 0 27px;
color: #fff;
font-weight: 600;
background: #2a2a2a;
border-bottom: 1px solid #8a8a8a;
white-space: nowrap;
`;

const DrawingArea = () => {
  const [open, setOpen] = useState(true);
  return (
    <CanvasColumn>
      <Canvas>
        <FloorPlan />
        <ViewBar>
          <ViewButton aria-label="旋转视图"><Icon name="orbit" size={20} /></ViewButton>
          <ViewButton aria-label="三维"><Icon name="cube3d" size={20} /></ViewButton>
          <ViewButton aria-label="俯视"><Icon name="cubeTop" size={20} /><Caret $dark /></ViewButton>
          <ViewButton aria-label="实体"><Icon name="cubeFull" size={20} /><Caret $dark /></ViewButton>
          <ViewButton aria-label="全屏"><Icon name="frame" size={20} /></ViewButton>
          <ViewButton aria-label="局部三维"><Icon name="hexBox" size={20} /></ViewButton>
          <ViewRule />
          <ViewButton aria-label="显示设置"><Icon name="listEye" size={20} /></ViewButton>
        </ViewBar>
        {open && (
          <Dialog role="dialog" aria-label="提示">
            <DialogHead>
              提示
              <CloseButton $tall aria-label="关闭" onClick={() => setOpen(false)}><Icon name="crossDark" /></CloseButton>
            </DialogHead>
            <DialogText>
              <svg width="28" height="28" viewBox="0 0 28 28" aria-hidden="true">
                <circle cx="14" cy="14" r="14" fill="#247bd8" />
                <circle cx="14" cy="8" r="2" fill="#fff" />
                <path d="M14 12.5v8" stroke="#fff" strokeWidth="3" strokeLinecap="round" />
              </svg>
              自定义构件桩承台不支持智能布置
            </DialogText>
            <OkButton onClick={() => setOpen(false)}>确定</OkButton>
          </Dialog>
        )}
      </Canvas>
      <HintBar><Icon name="hint" />按鼠标左键选择图元或拉框选择，按右键确认选择或 ESC 取消</HintBar>
    </CanvasColumn>
  );
};

/* ---------- display settings ---------- */

const RightColumn = styled.div`
position: relative;
flex: 0 0 280px;
min-width: 0;
display: flex;
padding-bottom: 1px;
`;

const ShowTabs = styled.div`
display: flex;
align-items: flex-end;
gap: 3px;
flex: 0 0 27px;
padding-left: 2px;
border-bottom: 1px solid #c3c6cc;
`;

const ShowTab = styled.button`
height: ${({ $active }) => ($active ? 24 : 21)}px;
margin-bottom: ${({ $active }) => ($active ? -1 : 0)}px;
padding: 0 ${({ $active }) => ($active ? 5 : 7)}px 1px;
border: ${({ $active }) => ($active ? '1px solid #c3c6cc' : '0')};
border-bottom: 0;
border-radius: 4px 4px 0 0;
color: ${({ $active }) => ($active ? '#2a7de1' : '#444')};
background: ${({ $active }) => ($active ? '#fff' : '#dcdcdc')};
`;

const RadioRow = styled.div`
display: flex;
align-items: center;
gap: 22px;
flex: 0 0 29px;
padding: 0 0 1px 7px;
`;

const RadioLabel = styled.label`
display: flex;
align-items: center;
gap: 7px;
color: #000;
white-space: nowrap;
`;

const Radio = styled.input`
width: 14px;
height: 14px;
margin: 0;
appearance: none;
border: 1px solid #858585;
border-radius: 50%;
background: #fff;
&:checked {
  background: radial-gradient(circle, #2a7de1 3px, #fff 4px);
}
`;

const FloorBox = styled.div`
flex: 1;
min-height: 0;
padding-top: 2px;
border: 1px solid #c3c6cc;
`;

const CheckLabel = styled.label`
display: flex;
align-items: center;
gap: ${({ $gap }) => $gap || 7}px;
color: ${({ $ink }) => $ink || '#8a8a8a'};
`;

const Check = styled.input`
width: 14px;
height: 14px;
margin: 0;
appearance: none;
border: 1px solid #a8a8a8;
border-radius: 2px;
background: ${({ disabled }) => (disabled ? '#f0f0f0' : '#fff')};
box-shadow: ${({ $partial }) => ($partial ? 'inset 0 0 0 1px #f0f0f0, inset 0 0 0 2px #c4c4c4' : 'none')};
&:checked::after {
  content: '';
  display: block;
  width: 8px;
  height: 4px;
  margin: 2px 0 0 2px;
  border: solid #999;
  border-width: 0 0 2px 2px;
  transform: rotate(-45deg);
}
`;

const ShowFooter = styled.div`
display: flex;
align-items: center;
flex: 0 0 39px;
padding-left: 1px;
`;

const Watermark = styled.div`
position: absolute;
left: -2px;
bottom: 0;
color: rgba(150, 150, 150, 0.65);
font-size: 15px;
line-height: 20px;
white-space: nowrap;
pointer-events: none;
`;

const WatermarkTitle = styled.div`
font-size: 20px;
line-height: 28px;
`;

const DisplaySettings = () => {
  const [scope, setScope] = useState('当前楼层');
  return (
    <RightColumn>
      <Panel>
        <PanelClose />
        <PanelTitle>显示设置</PanelTitle>
        <ShowTabs><ShowTab>图元显示</ShowTab><ShowTab $active>楼层显示</ShowTab></ShowTabs>
        <RadioRow>
          {['当前楼层', '相邻楼层', '全部楼层'].map((name) => (
            <RadioLabel key={name}>
              <Radio type="radio" name="scope" checked={scope === name} onChange={() => setScope(name)} />
              {name}
            </RadioLabel>
          ))}
        </RadioRow>
        <FloorBox>
          <TreeRow $indent={9} $gap={8}>
            <Caret /><CheckLabel><Check type="checkbox" disabled $partial />全部楼层</CheckLabel>
          </TreeRow>
          <TreeRow $indent={44}><CheckLabel><Check type="checkbox" disabled />首层</CheckLabel></TreeRow>
          <TreeRow $indent={44}><CheckLabel><Check type="checkbox" disabled defaultChecked />基础层</CheckLabel></TreeRow>
        </FloorBox>
        <ShowFooter>
          <CheckLabel $gap={3} $ink="#222"><Check type="checkbox" />其他区域图元亮显</CheckLabel>
        </ShowFooter>
      </Panel>
      <Watermark>
        <WatermarkTitle>激活 Windows</WatermarkTitle>
        转到"设置"以激活 Windows。
      </Watermark>
    </RightColumn>
  );
};

/* ---------- status bar ---------- */

const Status = styled.footer`
display: flex;
flex: 0 0 21px;
overflow: hidden;
padding-left: 2px;
line-height: 28px;
background: #fbfbfb;
`;

const StatusItem = styled.span`
flex: 0 0 ${({ $w }) => $w}px;
white-space: pre;
`;

const StatusButton = styled.button`
display: flex;
align-items: center;
justify-content: center;
gap: 6px;
flex: 0 0 ${({ $wide }) => ($wide ? 36 : 25)}px;
height: 24px;
margin: 2px 4px 0 0;
background: ${({ $on }) => ($on ? '#cfe2fa' : '#fff')};
border: 1px solid ${({ $on }) => ($on ? '#3c86e0' : '#9a9a9a')};
border-radius: 3px;
`;

const statusTools = [
  ['ortho'], ['region', true, true], ['crossOff'], ['angle', true], ['plusBar', true], ['shade'], ['curve'],
];

/* ---------- app ---------- */

const menus = ['开始', '工程设置', '建模', '工程量', '视图', '工具', '云应用', '造价协作', '协同建模(限免)', 'IGMS'];
const quick = ['upload', 'newDoc', 'open', 'save', 'undo', 'redo', 'sigma', 'calSearch', 'gridSearch', 'planSearch', 'pen', 'rail', 'docPlus'];
const combos = [['楼层', '基础层'], ['类别', '基础'], ['类型', '桩承台'], ['构件', 'ZCT-1']];

const Logo = () => (
  <svg width="34" height="34" viewBox="0 0 34 34" aria-hidden="true">
    <defs>
      <linearGradient id="logo" x1="0" y1="0" x2="1" y2="1">
        <stop offset="0" stopColor="#35cdf8" />
        <stop offset="0.5" stopColor="#1a8ff0" />
        <stop offset="1" stopColor="#0d4fd8" />
      </linearGradient>
    </defs>
    <path d="M2 3c3-2 8 0 15 0s11-2 14 0c1 3-1 6-4 7-2 1-5 0-6 2-1 4 0 8 1 13 0 7-10 7-10 0 1-5 2-9 1-13-1-2-5-1-7-2C3 9 1 6 2 3z" fill="url(#logo)" />
    <path d="M2 3c4 5 11 1 15 5 3-3 10-1 14-5-6-2-9 0-14 0S7 1 2 3z" fill="#2fb9f7" />
  </svg>
);

const App = () => {
  const [menu, setMenu] = useState('建模');
  return (
    <Screen>
      <GlobalStyle />
      <Edge />
      <Window>
        <Header>
          <LogoBox><Logo /><Corner /></LogoBox>
          <HeaderRows>
            <TitleRow>
              {quick.map((name) => {
                const wide = name === 'undo' || name === 'redo';
                return (
                  <QuickButton key={name} $wide={wide} aria-label={name}>
                    <Icon name={name} />{wide && <Caret />}
                  </QuickButton>
                );
              })}
              <Overflow aria-label="更多"><Caret /></Overflow>
              <AppTitle>广联达BIM土建计量平台 GTJ2021 - [F:\Users\Administrator\Desktop\工程5.GTJ]</AppTitle>
              <WinButton aria-label="最小化"><Icon name="minimize" /></WinButton>
              <WinButton aria-label="最大化"><Icon name="maximize" /></WinButton>
              <WinButton aria-label="关闭"><Icon name="crossDark" /></WinButton>
            </TitleRow>
            <MenuRow>
              {menus.map((name) => (
                <MenuItem key={name} $active={name === menu} onClick={() => setMenu(name)}>{name}</MenuItem>
              ))}
              <SearchBox>
                <PlainInput placeholder="请输入功能名称或问题描述" aria-label="搜索功能" />
                <Icon name="search" />
              </SearchBox>
              <User>
                <svg width="16" height="16" viewBox="0 0 16 16" aria-hidden="true">
                  <path d="M0 0h16v16H0z" fill="#86bdf5" />
                  <path d="M4.5 6a3.5 4 0 1 1 7 0c0 2-1 3-2 4l5 2.5V16h-13v-3.5l5-2.5c-1-1-2-2-2-4z" fill="#fff" />
                </svg>
                蔡嫚婷
              </User>
              <HeadTool aria-label="消息"><Icon name="chat" /></HeadTool>
              <HeadTool $w={26} aria-label="帮助"><Icon name="help" size={14} /><Caret $dark /></HeadTool>
              <HeadTool aria-label="皮肤"><Icon name="shirt" /></HeadTool>
              <HeadTool aria-label="收起"><Icon name="up" /></HeadTool>
            </MenuRow>
          </HeaderRows>
        </Header>

        <Ribbon>
          <Group $w={233}>
            <GroupBody $pad={6}>
              <BigTool $w={46}><Icon name="arrowBig" size={32} />选择</BigTool>
              <ToolGrid $cols="99px auto">{selectTools.map(toolItem)}</ToolGrid>
            </GroupBody>
            <Caption>选择</Caption>
          </Group>
          <Group $w={194}>
            <GroupBody><ToolGrid $cols="79px auto">{sheetTools.map(toolItem)}</ToolGrid></GroupBody>
            <Caption>图纸操作<Caret /></Caption>
          </Group>
          <Group $w={276}>
            <GroupBody><ToolGrid $cols="66px 111px auto">{commonTools.map(toolItem)}</ToolGrid></GroupBody>
            <Caption>通用操作<Caret /></Caption>
          </Group>
          <Group $w={206}>
            <GroupBody><ToolGrid $cols="54px 54px 63px auto">{editTools.map(toolItem)}</ToolGrid></GroupBody>
            <Caption>修改<Caret /></Caption>
          </Group>
          <Group $w={67}>
            <GroupBody $pad={7}><ToolGrid $cols="32px auto">{drawTools.map(toolItem)}</ToolGrid></GroupBody>
            <Caption>绘图</Caption>
          </Group>
          <Group $w={105}>
            <GroupBody>
              <BigTool $w={68} disabled><Icon name="capBig" size={32} muted />识别桩承台</BigTool>
              <ToolGrid $cols="auto">{toolItem(['capSmall', '', 'off'])}</ToolGrid>
            </GroupBody>
            <Caption>识别桩承台</Caption>
          </Group>
          <Group $w={78}>
            <GroupBody $pad={6}>
              <BigTool $w={50}><Icon name="gridBig" size={32} />智能布置<Caret /></BigTool>
            </GroupBody>
            <Caption>智能布置</Caption>
          </Group>
          <Group $w={114}>
            <GroupBody><ToolGrid $cols="23px 23px auto">{capTools.map(toolItem)}</ToolGrid></GroupBody>
            <Caption>桩承台二次编辑</Caption>
          </Group>
        </Ribbon>

        <ComboBar>
          {combos.map(([label, value]) => (
            <ComboBox key={label}>
              <ComboSelect aria-label={label} defaultValue={value}><option>{value}</option></ComboSelect>
              <Caret $dark />
            </ComboBox>
          ))}
        </ComboBar>

        <Main>
          <Navigation />
          <ComponentColumn />
          <Splitter><Grip aria-label="收起左侧" /></Splitter>
          <DrawingArea />
          <Splitter $white><Grip $right aria-label="收起右侧" /></Splitter>
          <DisplaySettings />
        </Main>

        <Status>
          <StatusItem $w={90}>层高：  2</StatusItem>
          <StatusItem $w={140}>标高：  -2~0</StatusItem>
          <StatusItem $w={110}>选中图元：2(6)</StatusItem>
          <StatusItem $w={110}>隐藏图元：0</StatusItem>
          {statusTools.map(([name, wide, on]) => (
            <StatusButton key={name} $wide={wide} $on={on} aria-label={name}>
              <Icon name={name} />{wide && <Caret $dark />}
            </StatusButton>
          ))}
        </Status>
      </Window>
    </Screen>
  );
};

export default App;
